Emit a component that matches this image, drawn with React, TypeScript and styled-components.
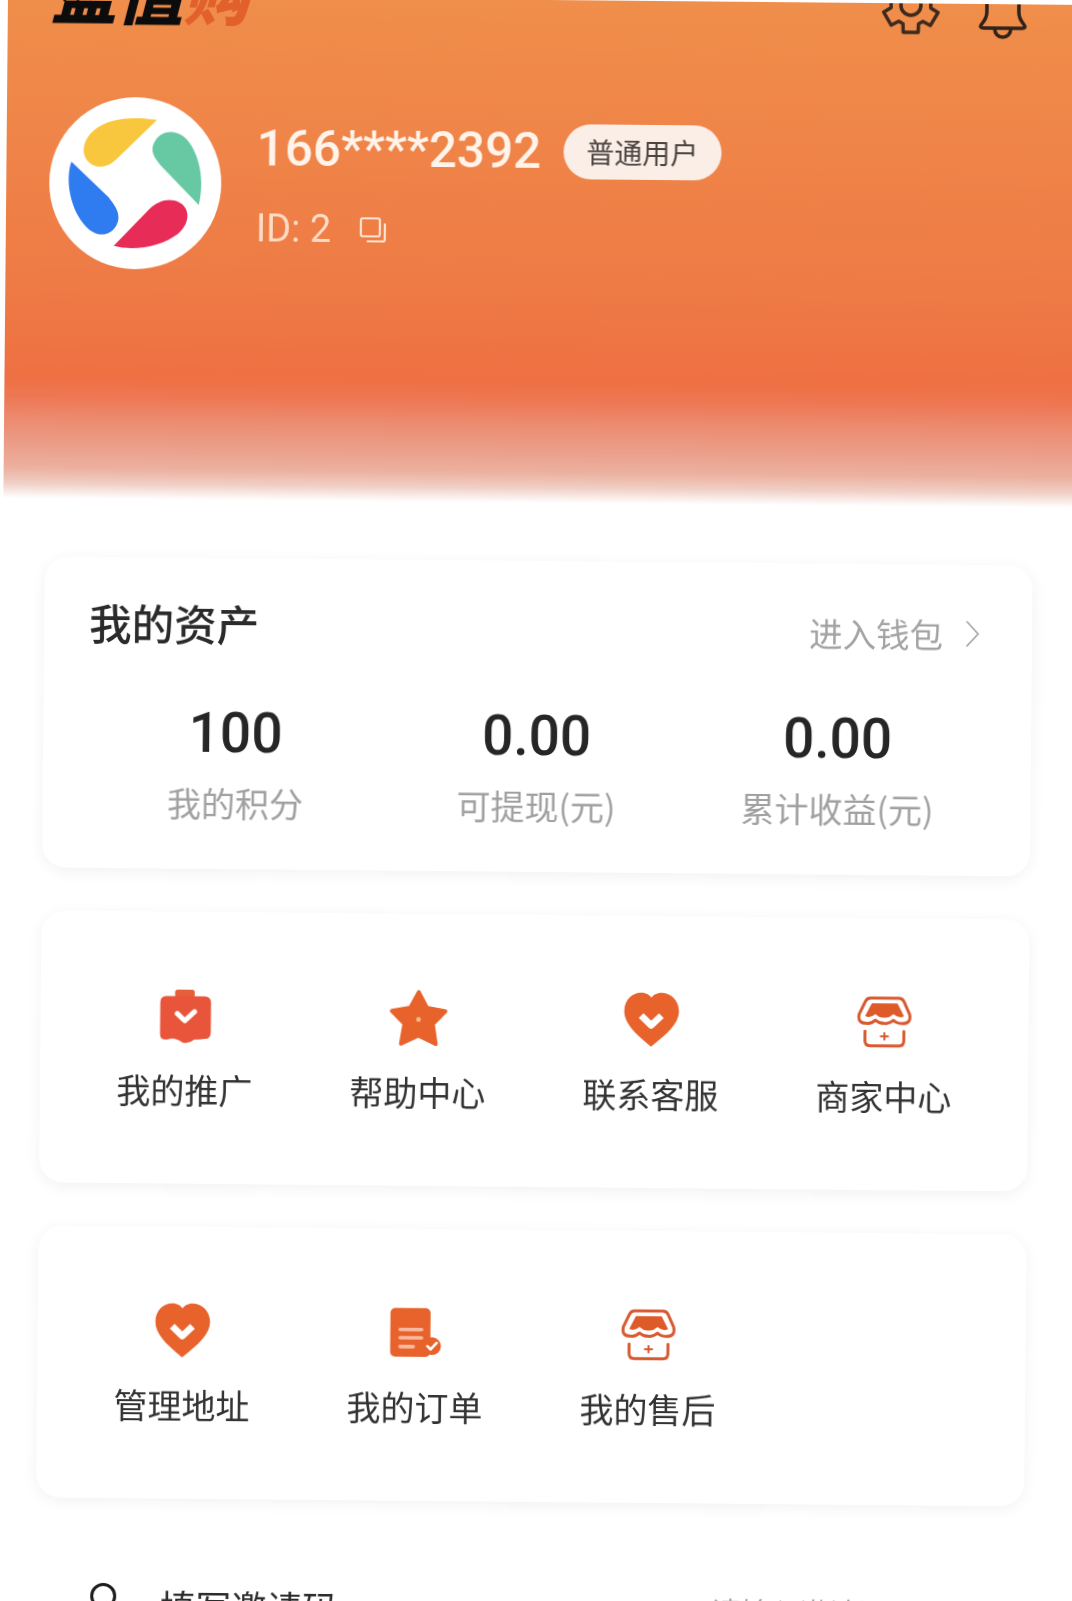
import React from "react";
import styled, { createGlobalStyle } from "styled-components";

const Global = createGlobalStyle`
  html, body { margin: 0; padding: 0; background: #fff; overflow: hidden; height: 1601px; }
  body { font-family: Roboto, "Noto Sans CJK SC", sans-serif; }
`;

const Page = styled.div`
  width: 1072px;
  height: 1640px;
  margin: -5.5px 0 0 8px;
  overflow: hidden;
  background: #fff;
  transform: rotate(0.53deg);
  transform-origin: 0 0;
  filter: blur(0.35px);
`;

const Header = styled.header`
  height: 503px;
  overflow: hidden;
  padding: 0 53px 0 43px;
  box-sizing: border-box;
  background: linear-gradient(
    180deg,
    #f08e4b 0%,
    #ee7a45 58%,
    #ee7043 76%,
    #ee7855 80%,
    #ec8a6e 84%,
    #eba08c 90%,
    #ecb1a0 94%,
    #f0cfc5 97%,
    #ffffff 100%
  );
`;

const TopBar = styled.div`
  height: 32px;
  display: flex;
  align-items: flex-end;
  justify-content: space-between;
`;

const Logo = styled.div`
  font-family: "Noto Sans CJK SC", sans-serif;
  font-size: 66px;
  font-weight: 900;
  font-style: italic;
  line-height: 66px;
  color: #0c0c0c;
  white-space: nowrap;
  margin-bottom: 5px;
`;

const LogoAccent = styled.span`
  color: #e2602c;
`;

const TopIcons = styled.div`
  display: flex;
  align-items: flex-end;
  gap: 38px;
`;

const BellSvg = styled.svg`
  display: block;
  margin-bottom: -4px;
`;

const Profile = styled.div`
  display: flex;
  align-items: flex-start;
  gap: 35px;
  margin-top: 69px;
`;

const Avatar = styled.svg`
  display: block;
  width: 172px;
  height: 172px;
  flex: none;
`;

const ProfileInfo = styled.div`
  display: flex;
  flex-direction: column;
  padding-top: 19px;
`;

const NameRow = styled.div`
  display: flex;
  align-items: center;
  gap: 22px;
  height: 62px;
`;

const Phone = styled.div`
  font-size: 49.5px;
  font-weight: 500;
  color: #fff3ea;
  line-height: 62px;
  white-space: nowrap;
`;

const Badge = styled.div`
  width: 158px;
  height: 55px;
  border-radius: 28px;
  background: #fbeee6;
  color: #4a4440;
  font-size: 28px;
  line-height: 55px;
  text-align: center;
  font-family: "Noto Sans CJK SC", sans-serif;
`;

const IdRow = styled.div`
  display: flex;
  align-items: center;
  gap: 28px;
  margin-top: 26px;
  height: 46px;
`;

const IdText = styled.div`
  font-size: 38px;
  color: rgba(255, 235, 220, 0.85);
  line-height: 46px;
`;

const Cards = styled.main`
  padding: 58px 42px 0 42px;
  display: flex;
  flex-direction: column;
  gap: 43px;
`;

const Card = styled.section`
  background: #fff;
  border-radius: 24px;
  box-shadow: 0 3px 16px rgba(0, 0, 0, 0.055);
`;

const AssetsCard = styled(Card)`
  height: 311px;
  padding: 37px 52px 0 45px;
  box-sizing: border-box;
`;

const AssetsHead = styled.div`
  display: flex;
  justify-content: space-between;
  align-items: center;
  height: 56px;
`;

const AssetsTitle = styled.h2`
  margin: 0;
  font-family: "Noto Sans CJK SC", sans-serif;
  font-size: 42.5px;
  font-weight: 500;
  color: #2b2b2b;
  line-height: 56px;
`;

const WalletLink = styled.div`
  display: flex;
  align-items: center;
  gap: 22px;
  font-family: "Noto Sans CJK SC", sans-serif;
  font-size: 33.5px;
  color: #a3a3a3;
  line-height: 44px;
  margin-top: 8px;
`;

const Stats = styled.div`
  display: grid;
  grid-template-columns: repeat(3, 301px);
  margin: 52px 0 0 -3px;
`;

const Stat = styled.div`
  display: flex;
  flex-direction: column;
  align-items: center;
`;

const StatValue = styled.div`
  font-size: 55px;
  font-weight: 500;
  color: #262626;
  line-height: 60px;
`;

const StatLabel = styled.div`
  font-family: "Noto Sans CJK SC", sans-serif;
  font-size: 34px;
  color: #a0a0a0;
  line-height: 44px;
  margin-top: 18px;
`;

const MenuCard = styled(Card)`
  height: 272px;
  padding: 74px 28px 0;
  box-sizing: border-box;
  display: grid;
  grid-template-columns: repeat(4, 233px);
  align-content: start;
`;

const MenuItem = styled.div`
  display: flex;
  flex-direction: column;
  align-items: center;
`;

const IconCell = styled.div`
  height: 60px;
  display: flex;
  align-items: center;
  justify-content: center;
`;

const MenuLabel = styled.div`
  font-family: "Noto Sans CJK SC", sans-serif;
  font-size: 34px;
  color: #333;
  line-height: 44px;
  margin-top: 22px;
  white-space: nowrap;
`;

const InviteRow = styled.div`
  display: flex;
  justify-content: space-between;
  align-items: flex-start;
  margin: 84px 42px 0 97px;
`;

const InviteLeft = styled.div`
  display: flex;
  align-items: flex-start;
  gap: 44px;
`;

const InviteLabel = styled.div`
  font-family: "Noto Sans CJK SC", sans-serif;
  font-size: 35.5px;
  color: #2b2b2b;
  line-height: 44px;
  margin-top: 1px;
`;

const InviteHint = styled.div`
  font-family: "Noto Sans CJK SC", sans-serif;
  font-size: 29.5px;
  color: #a3a3a3;
  line-height: 44px;
  margin: 1px 135px 0 0;
`;

const gearPoints = (() => {
  const pts: string[] = [];
  const outer = 28;
  const inner = 20;
  for (let i = 0; i < 6; i++) {
    const a = (Math.PI / 3) * i + Math.PI / 2;
    const w = 0.27;
    const g = 0.4;
    [
      [inner, a - g],
      [outer, a - w],
      [outer, a + w],
      [inner, a + g],
    ].forEach(([r, t]) => pts.push(`${(r * Math.cos(t)).toFixed(2)},${(r * Math.sin(t)).toFixed(2)}`));
  }
  return pts.join(" ");
})();

const GearIcon = () => (
  <svg width="60" height="60" viewBox="-30 -30 60 60" fill="none" stroke="#3d2a1e" strokeWidth="3.5" strokeLinejoin="round">
    <polygon points={gearPoints} />
    <circle r="10" />
  </svg>
);

const BellIcon = () => (
  <BellSvg width="48" height="60" viewBox="0 0 48 60" fill="none" stroke="#2f221a" strokeWidth="3.5" strokeLinecap="round">
    <path d="M8 0V32Q8 38 3 44Q0 48 5 48H43Q48 48 45 44Q40 38 40 32V0" />
    <path d="M16 49A8 8 0 0 0 32 49" />
  </BellSvg>
);

const CopyIcon = () => (
  <svg width="28" height="28" viewBox="0 0 28 28" fill="none" stroke="#fde3d2" strokeWidth="2.2" strokeLinejoin="round">
    <rect x="2" y="3" width="19" height="18" rx="2" />
    <path d="M26 8V24Q26 26 24 26H8" />
  </svg>
);

const Brand = () => (
  <Avatar viewBox="57 49 518 518">
    <circle cx="316" cy="308" r="259" fill="#fff" />
    <path fill="#f9c73e" d="M380 117C300 105 230 115 190 150C160 175 150 215 170 240C195 270 235 262 260 235Z" />
    <path fill="#66c9a4" d="M508 372C525 300 510 220 470 175C440 145 395 145 375 180C355 210 375 235 400 262Z" />
    <path fill="#2f7bf0" d="M123 245C105 300 120 380 160 430C190 470 235 475 258 440C280 405 255 375 235 350Z" />
    <path fill="#e72c57" d="M253 497C320 515 400 495 445 460C480 430 485 385 450 365C420 350 385 360 360 385Z" />
  </Avatar>
);

const ORANGE = "#e8622c";

const PromoIcon = () => (
  <svg width="54" height="57" viewBox="85 50 165 172">
    <rect x="135" y="55" width="60" height="24" rx="8" fill="#e4603c" />
    <path fill="#e9553a" d="M108 75H225Q245 75 245 95V185Q245 205 228 205Q210 208 195 207Q178 222 158 216Q135 200 115 207Q90 212 90 190V95Q90 75 108 75Z" />
    <path d="M142 128L165 150L195 122" fill="none" stroke="#fff" strokeWidth="15" strokeLinecap="round" strokeLinejoin="round" />
  </svg>
);

const StarIcon = () => (
  <svg width="60" height="60" viewBox="770 52 180 180">
    <polygon fill={ORANGE} stroke={ORANGE} strokeWidth="12" strokeLinejoin="round" points="860,65 885,112 940,122 903,160 912,220 860,195 808,220 818,160 780,122 835,112" />
    <circle cx="860" cy="147" r="7" fill="#f7c08a" />
  </svg>
);

const HeartIcon = () => (
  <svg width="56" height="56" viewBox="68 43 166 166">
    <path fill={ORANGE} d="M150 205C100 165 70 135 70 100C70 65 95 45 120 45C135 45 145 52 150 60C155 52 165 45 180 45C205 45 232 65 232 100C232 135 200 165 150 205Z" />
    <path d="M120 113L150 142L180 113" fill="none" stroke="#fff" strokeWidth="20" strokeLinejoin="round" />
  </svg>
);

const ShopIcon = () => (
  <svg width="56" height="54" viewBox="766 52 170 160" fill="none" stroke="#d85a30" strokeLinecap="round" strokeLinejoin="round">
    <path strokeWidth="9" d="M808 59H894Q905 59 910 70L927 108Q933 136 905 136Q888 136 878 126Q865 138 850 136Q835 136 823 126Q812 138 795 136Q768 136 774 108L792 70Q797 59 808 59Z" />
    <path fill="#de5a28" stroke="none" d="M812 75H890L910 114Q895 122 878 108Q865 120 850 118Q835 120 823 108Q808 122 792 114Z" />
    <path strokeWidth="9" d="M792 160V188Q792 204 808 204H895Q910 204 910 188V160" />
    <path strokeWidth="6" d="M840 175H862M851 165V185" />
  </svg>
);

const OrderIcon = () => (
  <svg width="52" height="52" viewBox="83 53 158 154">
    <rect x="85" y="55" width="122" height="148" rx="15" fill={ORANGE} />
    <circle cx="212" cy="170" r="27" fill={ORANGE} />
    <path d="M115 120H180M115 145H180M115 172H155" stroke="#f9b9a0" strokeWidth="11" strokeLinecap="round" />
    <path d="M198 170L208 180L226 160" fill="none" stroke="#fff" strokeWidth="8" strokeLinecap="round" strokeLinejoin="round" />
  </svg>
);

const Chevron = () => (
  <svg width="15" height="28" viewBox="0 0 15 28" fill="none" stroke="#a8a8a8" strokeWidth="1.8" strokeLinecap="round" strokeLinejoin="round">
    <path d="M2 2L13 14L2 26" />
  </svg>
);

const PersonIcon = () => (
  <svg width="26" height="40" viewBox="0 0 26 40" fill="none" stroke="#1c1c1c" strokeWidth="3">
    <circle cx="13" cy="14" r="11.5" />
  </svg>
);

const menuOne = [
  { label: "我的推广", icon: <PromoIcon /> },
  { label: "帮助中心", icon: <StarIcon /> },
  { label: "联系客服", icon: <HeartIcon /> },
  { label: "商家中心", icon: <ShopIcon /> },
];

const menuTwo = [
  { label: "管理地址", icon: <HeartIcon /> },
  { label: "我的订单", icon: <OrderIcon /> },
  { label: "我的售后", icon: <ShopIcon /> },
];

const stats = [
  { value: "100", label: "我的积分" },
  { value: "0.00", label: "可提现(元)" },
  { value: "0.00", label: "累计收益(元)" },
];

const Menu = ({ items }: { items: { label: string; icon: React.ReactNode }[] }) => (
  <MenuCard>
    {items.map((item) => (
      <MenuItem key={item.label}>
        <IconCell>{item.icon}</IconCell>
        <MenuLabel>{item.label}</MenuLabel>
      </MenuItem>
    ))}
  </MenuCard>
);

export default function App() {
  return (
    <>
      <Global />
      <Page>
        <Header>
          <TopBar>
            <Logo>
              盈值<LogoAccent>购</LogoAccent>
            </Logo>
            <TopIcons>
              <GearIcon />
              <BellIcon />
            </TopIcons>
          </TopBar>
          <Profile>
            <Brand />
            <ProfileInfo>
              <NameRow>
                <Phone>166****2392</Phone>
                <Badge>普通用户</Badge>
              </NameRow>
              <IdRow>
                <IdText>ID: 2</IdText>
                <CopyIcon />
              </IdRow>
            </ProfileInfo>
          </Profile>
        </Header>
        <Cards>
          <AssetsCard>
            <AssetsHead>
              <AssetsTitle>我的资产</AssetsTitle>
              <WalletLink>
                进入钱包
                <Chevron />
              </WalletLink>
            </AssetsHead>
            <Stats>
              {stats.map((s) => (
                <Stat key={s.label}>
                  <StatValue>{s.value}</StatValue>
                  <StatLabel>{s.label}</StatLabel>
                </Stat>
              ))}
            </Stats>
          </AssetsCard>
          <Menu items={menuOne} />
          <Menu items={menuTwo} />
        </Cards>
        <InviteRow>
          <InviteLeft>
            <PersonIcon />
            <InviteLabel>填写邀请码</InviteLabel>
          </InviteLeft>
          <InviteHint>请输入邀请码</InviteHint>
        </InviteRow>
      </Page>
    </>
  );
}
